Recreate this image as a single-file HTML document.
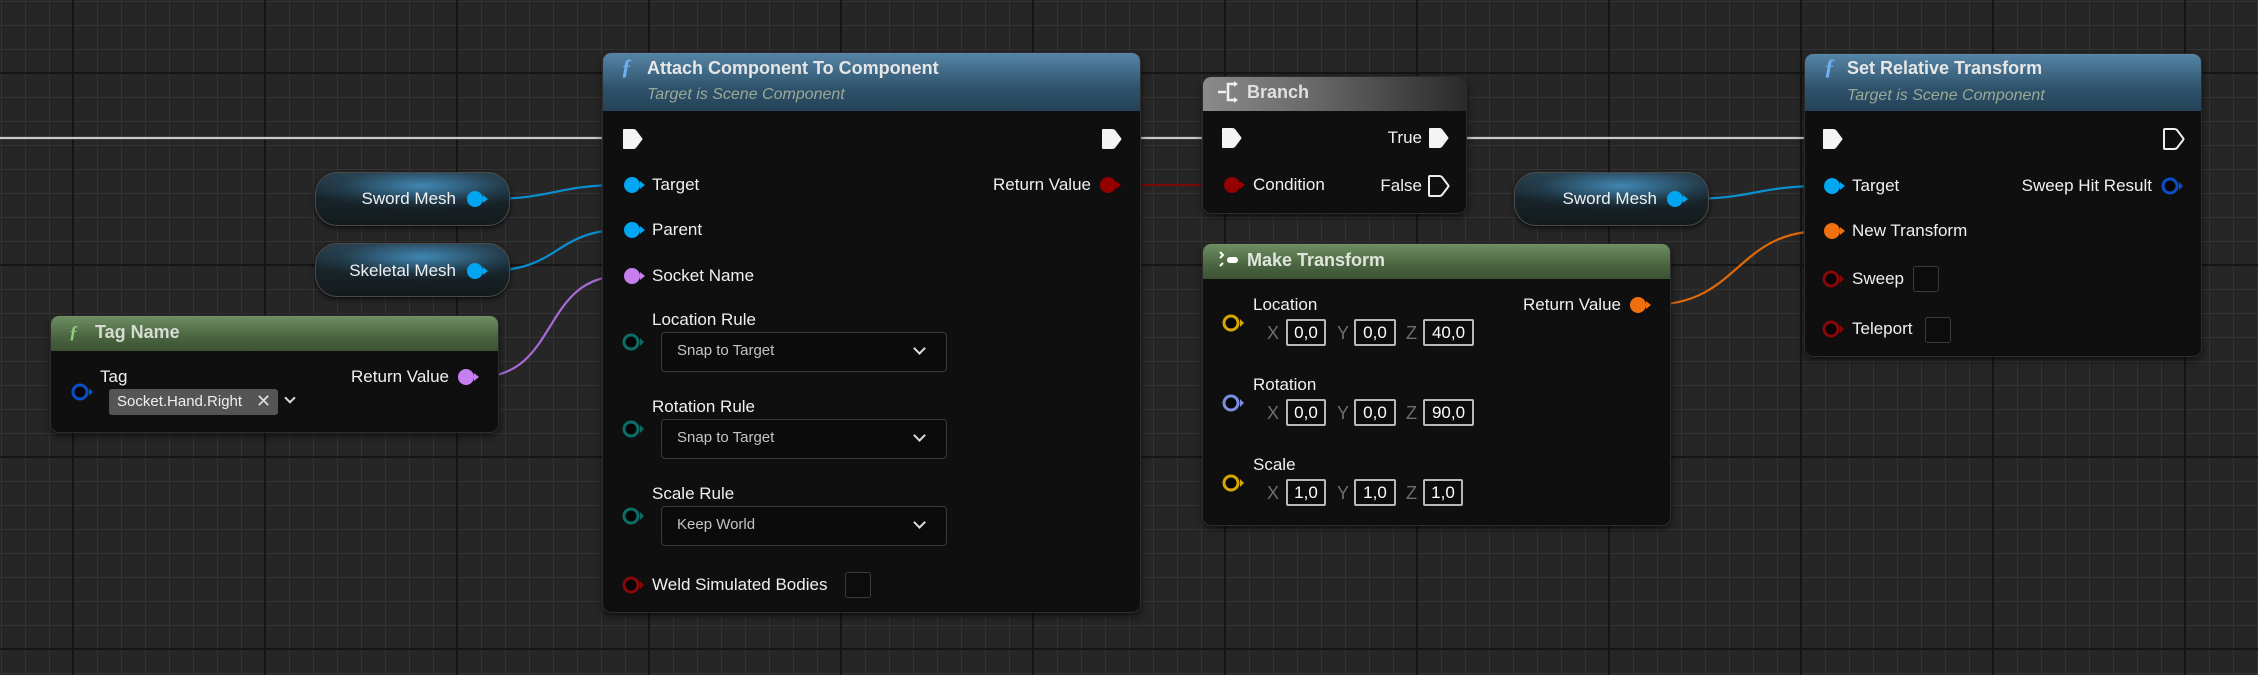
<!DOCTYPE html>
<html><head><meta charset="utf-8"><style>
*{margin:0;padding:0;box-sizing:border-box}
body{width:2258px;height:675px;overflow:hidden;position:relative;font-family:"Liberation Sans",sans-serif;
background-color:#262626;
background-image:
linear-gradient(to right,#151515 2px,transparent 2px),
linear-gradient(to bottom,#151515 2px,transparent 2px),
linear-gradient(to right,#343434 1px,transparent 1px),
linear-gradient(to bottom,#343434 1px,transparent 1px);
background-size:192px 192px,192px 192px,24px 24px,24px 24px;
background-position:72px 0,0 72px,1px 0,0 1px;}
.n{position:absolute;background:#0e0f0e;border:1px solid #2c2c2c;border-radius:9px;box-shadow:0 3px 8px rgba(0,0,0,.6);overflow:hidden}
.h{position:absolute;left:0;top:0;right:0;height:58px}
.hb{background:linear-gradient(180deg,rgba(90,140,175,.95) 0%,rgba(50,90,118,.9) 60%,rgba(40,75,100,.85) 100%)}
.hg{background:linear-gradient(180deg,#6f8f63 0%,#4a6540 60%,#3a5233 100%)}
.hgr{background:linear-gradient(90deg,#8a8a8a 0%,#6a6a6a 40%,#2a2a2a 100%)}
.t{position:absolute;white-space:nowrap;color:#f0f0f0;font-size:17px;line-height:20px}
.ti{font-weight:bold;font-size:18px;color:#e6e6e6}
.sub{font-style:italic;color:#9aa897;font-size:16px}
.pill{position:absolute;width:195px;height:54px;border-radius:22px;border:1px solid #4a4a4a;
background:radial-gradient(ellipse 60% 45% at 55% 25%,rgba(70,150,200,.85),rgba(40,90,120,.3) 70%,transparent),linear-gradient(180deg,#2a3c48 0%,#18242a 50%,#141a1c 100%);box-shadow:0 2px 6px rgba(0,0,0,.7)}
.dd{position:absolute;width:286px;height:40px;border:1px solid #3a3a3a;border-radius:4px;background:#0b0b0b}
.dd span{position:absolute;left:15px;top:9px;font-size:15px;color:#c4c4c4}
.dd i{position:absolute;right:22px;top:11px;width:9px;height:9px;border-right:2px solid #ddd;border-bottom:2px solid #ddd;transform:rotate(45deg)}
.cb{position:absolute;width:26px;height:26px;border:1px solid #3a3a3a;border-radius:3px;background:#0c0c0c}
.f{position:absolute;height:27px;border:2px solid #b8b8b8;border-radius:2px;background:#0c0c0c;color:#fff;font-size:17px;text-align:center;line-height:23px}
.xl{position:absolute;color:#6e6e6e;font-size:18px;line-height:20px}
</style></head><body>

<svg width="2258" height="675" style="position:absolute;left:0;top:0">
<g fill="none" stroke-width="2.2">
<path d="M0 138 H622" stroke="#c8c8c8"/>
<path d="M1121 138 H1222" stroke="#c8c8c8"/>
<path d="M1447 138 H1823" stroke="#c8c8c8"/>
<path d="M487 199 C555 199 555 185 622 185" stroke="#0a8fd0"/>
<path d="M487 271 C560 271 555 230 622 230" stroke="#0a8fd0"/>
<path d="M478 377 C560 377 540 276 622 276" stroke="#a86ad8"/>
<path d="M1120 185 H1222" stroke="#7a0a0a"/>
<path d="M1687 199 C1755 199 1755 186 1823 186" stroke="#0a8fd0"/>
<path d="M1650 305 C1740 305 1735 231 1823 231" stroke="#e06a08"/>
</g>
</svg>

<!-- Pills -->
<div class="pill" style="left:315px;top:172px"></div>
<div class="t" style="right:1802px;top:189px">Sword Mesh</div>
<div class="pill" style="left:315px;top:243px"></div>
<div class="t" style="right:1802px;top:261px">Skeletal Mesh</div>
<div class="pill" style="left:1514px;top:172px"></div>
<div class="t" style="right:601px;top:189px">Sword Mesh</div>

<!-- Tag Name -->
<div class="n" style="left:50px;top:315px;width:449px;height:118px">
<div class="h hg" style="height:35px"></div>
</div>
<div class="t ti" style="left:69px;top:322px;color:#8fd07a;font-style:italic;font-family:'Liberation Serif',serif">ƒ</div>
<div class="t ti" style="left:95px;top:322px;color:#d6dcd2">Tag Name</div>
<div class="t" style="left:100px;top:367px">Tag</div>
<div style="position:absolute;left:109px;top:389px;width:169px;height:26px;background:#555;border-radius:3px"></div>
<div class="t" style="left:117px;top:392px;font-size:15px;color:#eee">Socket.Hand.Right</div>
<div class="t" style="left:256px;top:391px;font-size:18px;color:#ddd">✕</div>
<div style="position:absolute;left:286px;top:394px;width:8px;height:8px;border-right:2px solid #ddd;border-bottom:2px solid #ddd;transform:rotate(45deg)"></div>
<div class="t" style="right:1809px;top:367px">Return Value</div>

<!-- Attach -->
<div class="n" style="left:602px;top:52px;width:539px;height:561px">
<div class="h hb"></div>
</div>
<div class="t ti" style="left:621px;top:57px;color:#6fb0ee;font-style:italic;font-family:'Liberation Serif',serif;font-size:22px">ƒ</div>
<div class="t ti" style="left:647px;top:58px">Attach Component To Component</div>
<div class="t sub" style="left:647px;top:85px">Target is Scene Component</div>
<div class="t" style="left:652px;top:175px">Target</div>
<div class="t" style="left:652px;top:220px">Parent</div>
<div class="t" style="left:652px;top:266px">Socket Name</div>
<div class="t" style="left:652px;top:310px">Location Rule</div>
<div class="dd" style="left:661px;top:332px"><span>Snap to Target</span><i></i></div>
<div class="t" style="left:652px;top:397px">Rotation Rule</div>
<div class="dd" style="left:661px;top:419px"><span>Snap to Target</span><i></i></div>
<div class="t" style="left:652px;top:484px">Scale Rule</div>
<div class="dd" style="left:661px;top:506px"><span>Keep World</span><i></i></div>
<div class="t" style="left:652px;top:575px">Weld Simulated Bodies</div>
<div class="cb" style="left:845px;top:572px"></div>
<div class="t" style="right:1167px;top:175px">Return Value</div>

<!-- Branch -->
<div class="n" style="left:1202px;top:76px;width:265px;height:138px">
<div class="h hgr" style="height:34px"></div>
</div>
<div class="t ti" style="left:1247px;top:82px;color:#e0e0e0">Branch</div>
<div class="t" style="right:836px;top:128px">True</div>
<div class="t" style="right:836px;top:176px">False</div>
<div class="t" style="left:1253px;top:175px">Condition</div>

<!-- Make Transform -->
<div class="n" style="left:1202px;top:243px;width:469px;height:283px">
<div class="h hg" style="height:35px"></div>
</div>
<div class="t ti" style="left:1247px;top:250px;color:#dfe4dc">Make Transform</div>
<div class="t" style="right:637px;top:295px">Return Value</div>
<div class="t" style="left:1253px;top:295px">Location</div>
<div class="xl" style="left:1267px;top:323px">X</div><div class="f" style="left:1286px;top:319px;width:40px">0,0</div>
<div class="xl" style="left:1337px;top:323px">Y</div><div class="f" style="left:1354px;top:319px;width:42px">0,0</div>
<div class="xl" style="left:1406px;top:323px">Z</div><div class="f" style="left:1423px;top:319px;width:51px">40,0</div>
<div class="t" style="left:1253px;top:375px">Rotation</div>
<div class="xl" style="left:1267px;top:403px">X</div><div class="f" style="left:1286px;top:399px;width:40px">0,0</div>
<div class="xl" style="left:1337px;top:403px">Y</div><div class="f" style="left:1354px;top:399px;width:42px">0,0</div>
<div class="xl" style="left:1406px;top:403px">Z</div><div class="f" style="left:1423px;top:399px;width:51px">90,0</div>
<div class="t" style="left:1253px;top:455px">Scale</div>
<div class="xl" style="left:1267px;top:483px">X</div><div class="f" style="left:1286px;top:479px;width:40px">1,0</div>
<div class="xl" style="left:1337px;top:483px">Y</div><div class="f" style="left:1354px;top:479px;width:42px">1,0</div>
<div class="xl" style="left:1406px;top:483px">Z</div><div class="f" style="left:1423px;top:479px;width:40px">1,0</div>

<!-- Set Relative Transform -->
<div class="n" style="left:1804px;top:53px;width:398px;height:304px">
<div class="h hb" style="height:57px"></div>
</div>
<div class="t ti" style="left:1824px;top:57px;color:#6fb0ee;font-style:italic;font-family:'Liberation Serif',serif;font-size:22px">ƒ</div>
<div class="t ti" style="left:1847px;top:58px">Set Relative Transform</div>
<div class="t sub" style="left:1847px;top:86px">Target is Scene Component</div>
<div class="t" style="left:1852px;top:176px">Target</div>
<div class="t" style="right:106px;top:176px">Sweep Hit Result</div>
<div class="t" style="left:1852px;top:221px">New Transform</div>
<div class="t" style="left:1852px;top:269px">Sweep</div>
<div class="cb" style="left:1913px;top:266px"></div>
<div class="t" style="left:1852px;top:319px">Teleport</div>
<div class="cb" style="left:1925px;top:317px"></div>

<!-- Pins overlay -->
<svg width="2258" height="675" style="position:absolute;left:0;top:0">
<defs>
<g id="ex"><path d="M-8 -10 H1 Q3 -10 4 -9 L10 -1 Q11 0 10 1 L4 9 Q3 10 1 10 H-8 Q-9 10 -9 9 V-9 Q-9 -10 -8 -10Z"/></g>
</defs>
<g fill="#f4f4f4">
<use href="#ex" x="632" y="139"/><use href="#ex" x="1111" y="139"/>
<use href="#ex" x="1231" y="138"/><use href="#ex" x="1438" y="138"/>
<use href="#ex" x="1832" y="139"/>
</g>
<g fill="none" stroke="#f0f0f0" stroke-width="2"><use href="#ex" x="1438" y="186"/><use href="#ex" x="2173" y="139"/></g>
<!-- filled pins -->
<g>
<g fill="#00a6f0"><circle cx="475" cy="199" r="8"/><path d="M483 195 L488 199 L483 203Z"/>
<circle cx="475" cy="271" r="8"/><path d="M483 267 L488 271 L483 275Z"/>
<circle cx="1675" cy="199" r="8"/><path d="M1683 195 L1688 199 L1683 203Z"/>
<circle cx="632" cy="185" r="8"/><path d="M640 181 L645 185 L640 189Z"/>
<circle cx="632" cy="230" r="8"/><path d="M640 226 L645 230 L640 234Z"/>
<circle cx="1832" cy="186" r="8"/><path d="M1840 182 L1845 186 L1840 190Z"/></g>
<g fill="#c77ff0"><circle cx="632" cy="276" r="8"/><path d="M640 272 L645 276 L640 280Z"/>
<circle cx="466" cy="377" r="8"/><path d="M474 373 L479 377 L474 381Z"/></g>
<g fill="#950000"><circle cx="1108" cy="185" r="8"/><path d="M1116 181 L1121 185 L1116 189Z"/>
<circle cx="1232" cy="185" r="8"/><path d="M1240 181 L1245 185 L1240 189Z"/></g>
<g fill="#f07010"><circle cx="1638" cy="305" r="8"/><path d="M1646 301 L1651 305 L1646 309Z"/>
<circle cx="1832" cy="231" r="8"/><path d="M1840 227 L1845 231 L1840 235Z"/></g>
</g>
<!-- hollow pins -->
<g fill="#050505" stroke-width="3">
<g stroke="#0a4fc8"><circle cx="80" cy="392" r="7"/><circle cx="2170" cy="186" r="7"/></g>
<g stroke="#0a6e66"><circle cx="631" cy="342" r="7"/><circle cx="631" cy="429" r="7"/><circle cx="631" cy="516" r="7"/></g>
<g stroke="#880808"><circle cx="631" cy="585" r="7"/><circle cx="1831" cy="279" r="7"/><circle cx="1831" cy="329" r="7"/></g>
<g stroke="#d8a800"><circle cx="1231" cy="323" r="7"/><circle cx="1231" cy="483" r="7"/></g>
<g stroke="#7a8fe0"><circle cx="1231" cy="403" r="7"/></g>
</g>
<g>
<path d="M89 388 L93 392 L89 396Z" fill="#0a4fc8"/><path d="M2179 182 L2183 186 L2179 190Z" fill="#0a4fc8"/>
<path d="M640 338 L644 342 L640 346Z" fill="#0a6e66"/><path d="M640 425 L644 429 L640 433Z" fill="#0a6e66"/><path d="M640 512 L644 516 L640 520Z" fill="#0a6e66"/>
<path d="M640 581 L644 585 L640 589Z" fill="#880808"/><path d="M1840 275 L1844 279 L1840 283Z" fill="#880808"/><path d="M1840 325 L1844 329 L1840 333Z" fill="#880808"/>
<path d="M1240 319 L1244 323 L1240 327Z" fill="#d8a800"/><path d="M1240 479 L1244 483 L1240 487Z" fill="#d8a800"/>
<path d="M1240 399 L1244 403 L1240 407Z" fill="#7a8fe0"/>
</g>
<!-- Branch icon -->
<g fill="none" stroke="#f0f0f0" stroke-width="2.5">
<path d="M1218 92 H1226 M1234 84 H1228 V100 H1234"/>
</g>
<path d="M1234 81 L1238 84 L1234 87Z M1234 97 L1238 100 L1234 103Z" fill="#f0f0f0"/>
<!-- Make transform icon -->
<path d="M1220 252 L1223 255 L1220 258 M1220 266 L1223 263" stroke="#fff" stroke-width="2" fill="none"/>
<rect x="1227" y="257" width="11" height="6" rx="3" fill="#fff"/>
</svg>
</body></html>
